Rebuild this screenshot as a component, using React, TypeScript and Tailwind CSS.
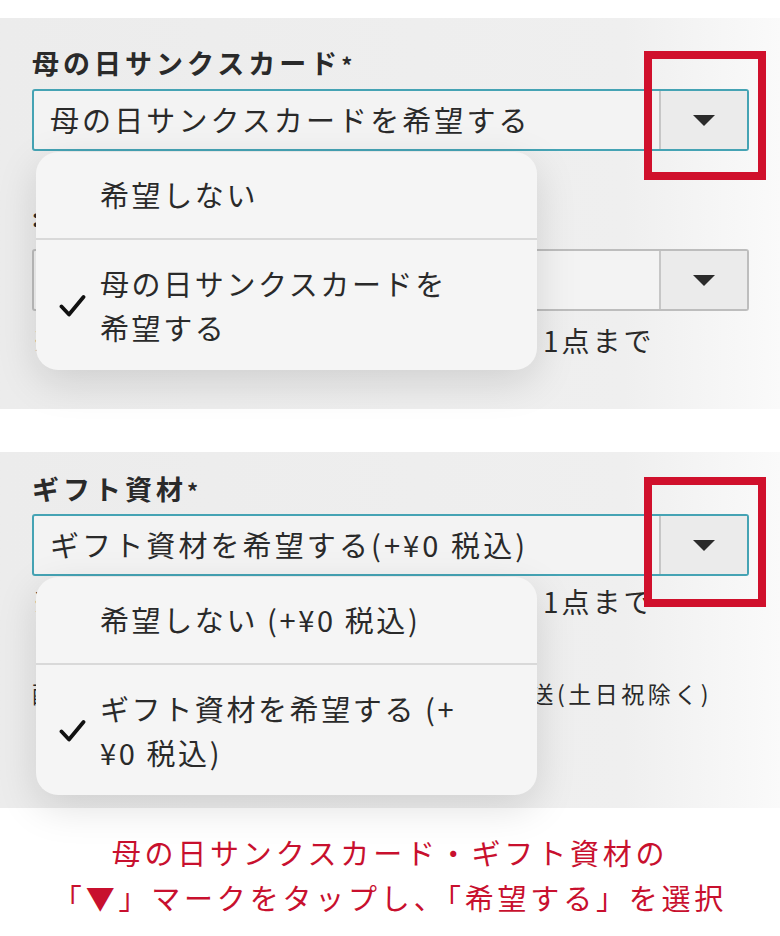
const jp = "font-['Noto_Sans_CJK_JP','Noto_Sans',sans-serif]"

function Triangle() {
    return (
        <svg width="22" height="11" viewBox="0 0 22 11">
            <path d="M0 0H22L11 11Z" fill="#2b2b2b" />
        </svg>
    )
}

function Check() {
    return (
        <svg width="27" height="24" viewBox="0 0 27 24">
            <path d="M2.5 12.5L10 20.5L24.5 3" stroke="#111" strokeWidth="3.8" fill="none" strokeLinecap="round" strokeLinejoin="round" />
        </svg>
    )
}

function Select({ text, active }: { text?: string; active?: boolean }) {
    return (
        <div className={`flex h-[62px] w-[717px] rounded-[3px] border-2 ${active ? 'border-[#45a3b4]' : 'border-[#bdbdbd]'} bg-[#f3f3f3]`}>
            <div className="flex flex-1 items-center pl-[16px] text-[29px] tracking-[3.1px] text-[#2a2a2a]">{text}</div>
            <div className="flex w-[88px] items-center justify-center border-l-2 border-[#c6c6c6] bg-[#ebebeb]">
                <Triangle />
            </div>
        </div>
    )
}

function Menu({ first, second, top }: { first: string; second: React.ReactNode; top: string }) {
    return (
        <div className={`absolute left-[36px] z-10 w-[501px] overflow-hidden rounded-[22px] bg-[#f5f5f5] text-[29px] tracking-[2.6px] text-[#2a2a2a] shadow-[0_12px_40px_rgba(0,0,0,0.13)] ${top}`}>
            <div className="flex h-[86px] items-center pl-[64px]">{first}</div>
            <div className="h-[2px] bg-[#d9d9d9]" />
            <div className="flex h-[130px] items-center">
                <div className="flex w-[64px] justify-center pl-[8px] pt-[2px]">
                    <Check />
                </div>
                <div className="leading-[44px]">{second}</div>
            </div>
        </div>
    )
}

function RedFrame({ top, height }: { top: string; height: string }) {
    return <div className={`absolute left-[644px] z-20 w-[122px] border-[8px] border-[#d0102c] ${top} ${height}`} />
}

const panel = 'relative bg-gradient-to-r from-[#ececec] via-[#efefef] via-80% to-[#fafafa] pl-[32px]'
const label = 'h-[38px] text-[27px] font-bold leading-[38px] tracking-[4px] text-[#2a2a2a]'

export default function App() {
    return (
        <div className={`h-[936px] w-[780px] overflow-hidden bg-white pt-[18px] ${jp}`}>
            {/* 母の日サンクスカード */}
            <div className={`${panel} h-[391px] pt-[26px]`}>
                <div className={label}>
                    母の日サンクスカード<span className="text-[22px]">*</span>
                </div>
                <div className="mt-[7px]">
                    <Select text="母の日サンクスカードを希望する" active />
                </div>
                <div className="flex h-[98px] items-end pb-[14px] text-[24px] font-bold text-[#2a2a2a]">:</div>
                <Select />
                <div className="mt-[10px] flex h-[38px] items-center text-[28px] leading-[38px] tracking-[3px] text-[#2a2a2a]">
                    <span>※</span>
                    <span className="ml-[480px]">1点まで</span>
                </div>

                <Menu
                    top="top-[134px]"
                    first="希望しない"
                    second={<>母の日サンクスカードを<br />希望する</>}
                />
                <RedFrame top="top-[33px]" height="h-[129px]" />
            </div>

            <div className="h-[43px]" />

            {/* ギフト資材 */}
            <div className={`${panel} h-[356px] pt-[18px]`}>
                <div className={label}>
                    ギフト資材<span className="text-[22px]">*</span>
                </div>
                <div className="mt-[6px]">
                    <Select text="ギフト資材を希望する(+¥0 税込)" active />
                </div>
                <div className="mt-[6px] flex h-[38px] items-center text-[28px] tracking-[3px] text-[#2a2a2a]">
                    <span>※</span>
                    <span className="ml-[480px]">1点まで</span>
                </div>
                <div className="mt-[54px] flex h-[38px] items-center text-[23px] tracking-[3.5px] text-[#2a2a2a]">
                    <span>配</span>
                    <span className="ml-[472px]">送(土日祝除く)</span>
                </div>

                <Menu
                    top="top-[125px]"
                    first="希望しない (+¥0 税込)"
                    second={<>ギフト資材を希望する (+<br />¥0 税込)</>}
                />
                <RedFrame top="top-[25px]" height="h-[130px]" />
            </div>

            <div className="mt-[22px] text-center text-[29px] leading-[45px] tracking-[3.8px] text-[#c8102e]">
                母の日サンクスカード・ギフト資材の<br />
                「▼」マークをタップし、「希望する」を選択
            </div>
        </div>
    )
}
